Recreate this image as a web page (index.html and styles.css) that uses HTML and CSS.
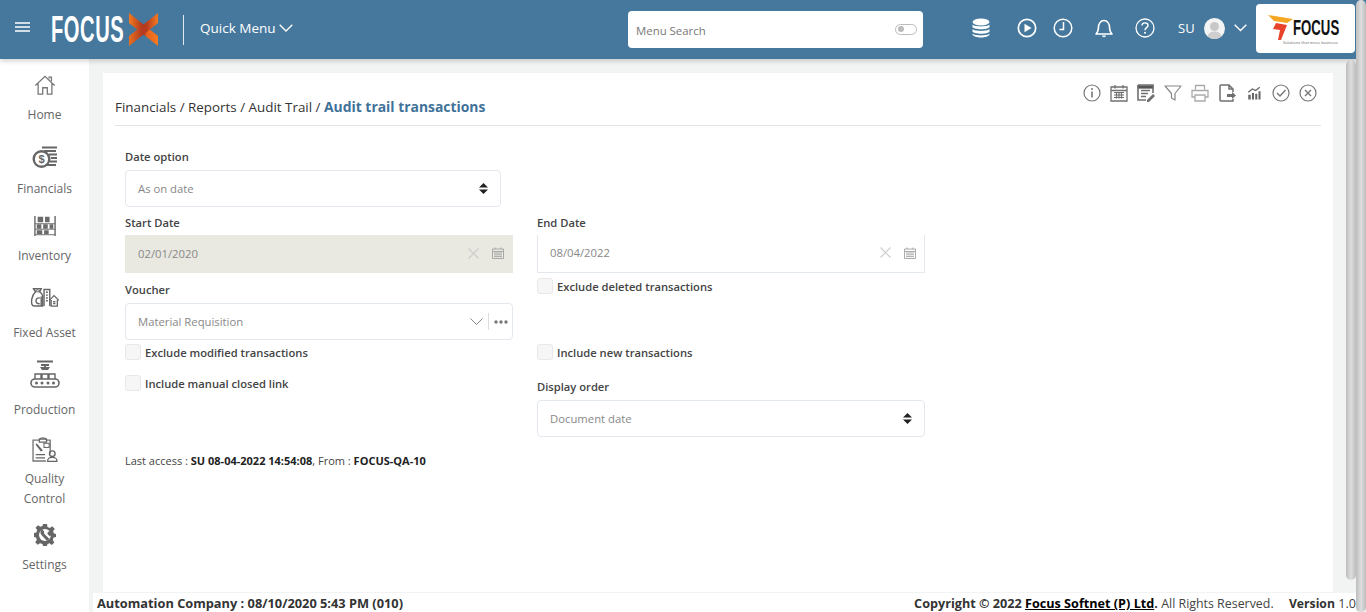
FILE: index.html
```html
<!DOCTYPE html>
<html lang="en">
<head>
  <meta charset="UTF-8" />
  <title>Audit trail transactions - Focus X</title>
  <link rel="stylesheet" href="styles.css">
</head>
<body>

<header class="topbar">
  <svg class="burger" viewBox="0 0 15 10"><path d="M0 1h15M0 5h15M0 9h15" stroke="#fff" stroke-width="1.6"/></svg>
  <span class="brand"><span>FOCUS</span></span>
  <svg class="brand-x" viewBox="0 0 29 33">
    <defs>
      <linearGradient id="xa" x1="0" x2="1" y1="0" y2="0"><stop offset="0" stop-color="#f47a20"/><stop offset=".5" stop-color="#a8321f"/><stop offset=".62" stop-color="#e8621f"/><stop offset="1" stop-color="#f47a20"/></linearGradient>
      <linearGradient id="xb" x1="0" x2="1" y1="0" y2="0"><stop offset="0" stop-color="#e8701f"/><stop offset=".45" stop-color="#b53a1f"/><stop offset=".6" stop-color="#b53a1f"/><stop offset="1" stop-color="#f47a20"/></linearGradient>
    </defs>
    <path d="M0 0 29 23V33L0 10Z" fill="url(#xa)"/>
    <path d="M29 0V10L0 33V23Z" fill="url(#xb)"/>
  </svg>
  <span class="top-divider"></span>
  <span class="quick-menu">Quick Menu</span>
  <svg class="quick-chevron" viewBox="0 0 14 8"><path d="M.7.7 7 7 13.3.7" fill="none" stroke="#fff" stroke-width="1.3"/></svg>

  <div class="menu-search">
    <span>Menu Search</span>
    <span class="toggle"><i></i></span>
  </div>

  <svg class="ti ti-db" viewBox="0 0 18 20"><ellipse cx="9" cy="4" rx="8.5" ry="3.5" fill="#fff"/><path d="M.5 6.5C2 9 16 9 17.5 6.5V9C16 12 2 12 .5 9ZM.5 11C2 13.5 16 13.5 17.5 11V13.5C16 16.5 2 16.5 .5 13.5ZM.5 15.5C2 18 16 18 17.5 15.5V16.5C16 20.5 2 20.5 .5 16.5Z" fill="#fff"/></svg>
  <svg class="ti ti-play" viewBox="0 0 20 20"><circle cx="10" cy="10" r="8.7" fill="none" stroke="#fff" stroke-width="1.7"/><path d="M7.5 5.8 14.5 10 7.5 14.2Z" fill="#fff"/></svg>
  <svg class="ti ti-clock" viewBox="0 0 20 20"><circle cx="10" cy="10" r="8.8" fill="none" stroke="#fff" stroke-width="1.5"/><path d="M10.500 4V11.500H6.500" fill="none" stroke="#fff" stroke-width="1.5"/></svg>
  <svg class="ti ti-bell" viewBox="0 0 18 20"><path d="M1 16c2-2 2.500-4 2.500-7S5.500 2.500 9 2.500 14.500 6 14.500 9s.5 5 2.500 7Z" fill="none" stroke="#fff" stroke-width="1.6" stroke-linejoin="round"/><path d="M6.800 17.500a2.300 2.300 0 0 0 4.400 0Z" fill="#fff"/></svg>
  <svg class="ti ti-help" viewBox="0 0 20 20"><circle cx="10" cy="10" r="9" fill="none" stroke="#fff" stroke-width="1.3"/><path d="M7 7.600C7 5.800 8.300 4.900 10 4.900c1.800 0 3 1 3 2.500 0 2.300-3 2.200-3 4.800" fill="none" stroke="#fff" stroke-width="1.4"/><circle cx="10" cy="14.700" r="1" fill="#fff"/></svg>
  <span class="user-code">SU</span>
  <svg class="avatar" viewBox="0 0 21 21"><circle cx="10.500" cy="10.500" r="10.500" fill="#f4f4f4"/><circle cx="10.500" cy="8.500" r="4.500" fill="#c8c8c8"/><path d="M3.500 18.500c1-4 3.500-5 7-5s6 1 7 5a10.500 10.500 0 0 1-14 0Z" fill="#cfcfcf"/></svg>
  <svg class="user-chevron" viewBox="0 0 13 8"><path d="M.7.7 6.500 6.500 12.300.7" fill="none" stroke="#fff" stroke-width="1.4"/></svg>

  <div class="company-logo">
    <svg class="logo-mark" viewBox="0 0 25 25"><path d="M0 0 25 4 19 8 6 6Z" fill="#f5a623"/><path d="M8 8 19 10 13 25 10 25 12 15 5 14Z" fill="#e8432a"/></svg>
    <div class="logo-words">
      <span class="logo-name"><span>FOCUS</span></span>
      <span class="logo-tag">Solutions that move business</span>
    </div>
  </div>
</header>

<div class="shell">
  <nav class="sidebar">
    <a class="nav-item n-home">
      <svg viewBox="0 0 24 24"><path d="M1.500 12.500 12 2.500 22.500 12.500M4.500 10.500V22H9.500V15H14.500V22H19.500V10.500M16.500 5V3.500H19V8" fill="none" stroke="#777" stroke-width="1.400"/></svg>
      <span>Home</span>
    </a>
    <a class="nav-item n-fin">
      <svg viewBox="0 0 26 22"><circle cx="9.500" cy="13" r="7.800" fill="none" stroke="#666" stroke-width="2.400"/><text x="9.500" y="17" class="dollar">$</text><path d="M10 1.500H25M12 5H24M17 8.500H25M19 12H25M18 15.500H25M13 19H24" stroke="#666" stroke-width="2.200"/></svg>
      <span>Financials</span>
    </a>
    <a class="nav-item n-inv">
      <svg viewBox="0 0 24 24"><path d="M1 1V23M23 1V23" stroke="#666" stroke-width="1.500"/><path d="M1 9.500H23M1 15.500H23M1 21.500H23" stroke="#666" stroke-width="1"/><path d="M4 2H10V8H4ZM12 2H17V8H12ZM3 10H8V15H3ZM10 10H15V15H10ZM17 10H21V15H17ZM3 16.500H9V21H3ZM11 16.500H16V21H11Z" fill="#6b6b6b"/></svg>
      <span>Inventory</span>
    </a>
    <a class="nav-item n-fix">
      <svg viewBox="0 0 30 20"><path d="M3 .8H11L9.500 4C11 5 12 6 12.500 8V19H4C1 19 .5 16 1 12 1.500 9 3 6 5 4Z" fill="none" stroke="#666" stroke-width="1.500"/><path d="M3.500 1.500 5 3.500 7 1.500 8.500 3.500 10.500 1.500M5 4H9.500" fill="none" stroke="#666" stroke-width="1"/><path d="M9.500 10.500C7 10 5.500 11.500 5.500 13.500S7 17 9.500 16.500" fill="none" stroke="#666" stroke-width="1.500"/><path d="M14 19V1.500H20V19M16 4.500H18M16 7.500H18M16 10.500H18M16 13.500H18M11 9V19" fill="none" stroke="#666" stroke-width="1.500"/><path d="M19.500 13 24.500 8 29.500 13M21.500 12.500V19H28V12.500M23.500 14.500H26M23.500 16.500H26" fill="none" stroke="#666" stroke-width="1.400"/></svg>
      <span>Fixed Asset</span>
    </a>
    <a class="nav-item n-pro">
      <svg viewBox="0 0 30 28"><path d="M7 1.500H23M11 5H19M15 5V10" stroke="#666" stroke-width="1.800"/><path d="M10 7H20L18 10H12Z" fill="#666"/><path d="M5 19V14H11V19M12 19V14H18V19M19 19V14H25V19" fill="none" stroke="#666" stroke-width="1.400"/><rect x="1" y="19" width="28" height="8" rx="4" fill="none" stroke="#666" stroke-width="1.600"/><circle cx="6.500" cy="23" r="1.500" fill="#666"/><circle cx="12" cy="23" r="1.500" fill="#666"/><circle cx="18" cy="23" r="1.500" fill="#666"/><circle cx="23.500" cy="23" r="1.500" fill="#666"/></svg>
      <span>Production</span>
    </a>
    <a class="nav-item n-qua">
      <svg viewBox="0 0 26 25"><path d="M18 17V4H14.500C14 1 8 1 7.500 4H1.500V24H14" fill="none" stroke="#777" stroke-width="1.300"/><path d="M7.500 3H14.500V6H7.500ZM4 18H13M4 21H13" fill="none" stroke="#666" stroke-width="1.200"/><path d="M5 7 11 14 9 15 4 8.500Z" fill="#666"/><rect x="12" y="7" width="5" height="4" fill="none" stroke="#666"/><circle cx="20" cy="17" r="2.700" fill="none" stroke="#666" stroke-width="1.300"/><path d="M15.500 24.500C15.500 21 17 20.500 20 20.500S24.500 21 24.500 24.500Z" fill="none" stroke="#666" stroke-width="1.300"/></svg>
      <span>Quality<br>Control</span>
    </a>
    <a class="nav-item n-set">
      <svg viewBox="0 0 22 22"><path d="M9 0H13L13.500 3 15.800 4 18.300 2.200 20.800 5 19 7.300 20 9.500 22 10V13L19.600 13.500 18.800 16 20.300 18.500 17.800 21 15.500 19.300 13.500 20 13 22H9L8.500 20 6 19.200 3.700 20.800 1.200 18.300 2.800 16 2 13.500 0 13V9L2.300 8.500 3.200 6 1.500 3.700 4 1.200 6.300 2.800 8.500 2Z" fill="#666"/><circle cx="11" cy="11" r="6" fill="#fff"/><path d="M8 5.500C6 7 6 9.500 7.500 11L13 17 15.500 15 10 9.500C10.500 8 10 6 8 5.500ZM17 7C15 6.500 13 8 13.500 10L16 12.500C17.500 11.500 18 9 17 7Z" fill="#666"/></svg>
      <span>Settings</span>
    </a>
  </nav>

  <main class="content">
    <section class="card">
      <div class="title-row">
        <div class="crumbs">Financials / Reports / Audit Trail / <b>Audit trail transactions</b></div>
        <div class="tools">
          <svg viewBox="0 0 18 18"><circle cx="9" cy="9" r="8" fill="none" stroke="#777" stroke-width="1.200"/><path d="M9 7.500V13.500" stroke="#777" stroke-width="1.600"/><circle cx="9" cy="5" r="1" fill="#777"/></svg>
          <svg viewBox="0 0 18 18"><path d="M1 3H17V17H1ZM1 6.500H17M5 1V4.500M13 1V4.500" fill="none" stroke="#707070" stroke-width="1.300"/><path d="M4 8.500H14M4 11H14M4 13.500H14M6.500 8V14.500M9 8V14.500M11.500 8V14.500" stroke="#707070" stroke-width="1.200"/></svg>
          <svg viewBox="0 0 18 18"><path d="M1 1H16V9M9 16H1V1" fill="none" stroke="#707070" stroke-width="1.600"/><path d="M1 2H16V4H1ZM4 6.500H13M4 9.500H11M4 12.500H9" stroke="#707070" stroke-width="1.300"/><path d="M10 16 16 10 18 12 12 18H10Z" fill="#707070"/></svg>
          <svg viewBox="0 0 18 18"><path d="M1 2H17L11 9.500V16L7.500 14V9.500Z" fill="none" stroke="#888" stroke-width="1.200" stroke-linejoin="round"/></svg>
          <svg viewBox="0 0 18 18"><path d="M4.500 5.500V1.500H13.500V5.500M4 13H1V6.500H17V13H14" fill="none" stroke="#aaa" stroke-width="1.300"/><path d="M4 11H14V17H4Z" fill="none" stroke="#aaa" stroke-width="1.300"/></svg>
          <svg viewBox="0 0 18 18"><path d="M15 8V5L11 1H3Q2 1 2 2V16Q2 17 3 17H15V15M11 1V5H15" fill="none" stroke="#707070" stroke-width="1.500"/><path d="M9 10H14V8L18 11.500 14 15V13H9Z" fill="#707070"/></svg>
          <svg viewBox="-2 -2 22 22"><path d="M2 11H5V17H2ZM6.500 9H9V17H6.500ZM10.500 10H13V17H10.500ZM14.500 7H17V17H14.500Z" fill="#666"/><path d="M2 8 7 4 11 6 16 2" fill="none" stroke="#666" stroke-width="1.500"/></svg>
          <svg viewBox="0 0 18 18"><circle cx="9" cy="9" r="8" fill="none" stroke="#777" stroke-width="1.200"/><path d="M5 9 8 12 13.500 6" fill="none" stroke="#777" stroke-width="1.400"/></svg>
          <svg viewBox="0 0 18 18"><circle cx="9" cy="9" r="8" fill="none" stroke="#777" stroke-width="1.200"/><path d="M6 6 12 12M12 6 6 12" stroke="#777" stroke-width="1.400"/></svg>
        </div>
      </div>

      <form class="report-form">
        <label class="field-label">Date option</label>
        <div class="control control-short">
          <span>As on date</span>
          <svg class="updown" viewBox="0 0 9 11"><path d="M4.500 0 9 4.500H0ZM4.500 11 0 6.500H9Z" fill="#222"/></svg>
        </div>

        <div class="form-cols">
          <div class="col">
            <label class="field-label">Start Date</label>
            <div class="control control-date disabled">
              <span>02/01/2020</span>
              <svg class="clear" viewBox="0 0 11 11"><path d="M.5.500 10.500 10.500M10.500.500 .5 10.500" stroke="#ccc" stroke-width="1.100"/></svg>
              <svg class="cal" viewBox="0 0 12 12"><path d="M.5 2H11.500V11.500H.5ZM.5 4.500H11.500M3 .5V2.500M9 .5V2.500M2 6H10M2 7.800H10M2 9.600H10" fill="none" stroke="#aaa" stroke-width="1"/></svg>
            </div>
            <label class="field-label voucher-label">Voucher</label>
            <div class="control control-voucher">
              <span>Material Requisition</span>
              <svg class="vchev" viewBox="0 0 13 7"><path d="M.5.500 6.500 6.500 12.500.5" fill="none" stroke="#888" stroke-width="1"/></svg>
              <i class="vsep"></i>
              <svg class="dots" viewBox="0 0 14 4"><circle cx="2" cy="2" r="1.700" fill="#777"/><circle cx="7" cy="2" r="1.700" fill="#777"/><circle cx="12" cy="2" r="1.700" fill="#777"/></svg>
            </div>
            <label class="check check-mod"><i></i>Exclude modified transactions</label>
            <label class="check check-man"><i></i>Include manual closed link</label>
          </div>

          <div class="col">
            <label class="field-label">End Date</label>
            <div class="control control-date open-top">
              <span>08/04/2022</span>
              <svg class="clear" viewBox="0 0 11 11"><path d="M.5.500 10.500 10.500M10.500.500 .5 10.500" stroke="#ccc" stroke-width="1.100"/></svg>
              <svg class="cal" viewBox="0 0 12 12"><path d="M.5 2H11.500V11.500H.5ZM.5 4.500H11.500M3 .5V2.500M9 .5V2.500M2 6H10M2 7.800H10M2 9.600H10" fill="none" stroke="#aaa" stroke-width="1"/></svg>
            </div>
            <label class="check check-del"><i></i>Exclude deleted transactions</label>
            <label class="check check-new"><i></i>Include new transactions</label>
            <label class="field-label order-label">Display order</label>
            <div class="control">
              <span>Document date</span>
              <svg class="updown" viewBox="0 0 9 11"><path d="M4.500 0 9 4.500H0ZM4.500 11 0 6.500H9Z" fill="#222"/></svg>
            </div>
          </div>
        </div>

        <p class="last-access">Last access : <b>SU 08-04-2022 14:54:08</b>, From : <b>FOCUS-QA-10</b></p>
      </form>
    </section>

    <footer class="statusbar">
      <b>Automation Company : 08/10/2020 5:43 PM (010)</b>
      <span class="status-right"><b>Copyright © 2022 <u>Focus Softnet (P) Ltd</u>.</b> <span class="rights">All Rights Reserved.</span> <b class="version">Version</b> 1.0</span>
    </footer>
  </main>
</div>

<div class="scroll scroll-inner"></div>
<div class="scroll scroll-outer"></div>

</body>
</html>
```

FILE: styles.css
```css
* {
  box-sizing: border-box;
}
html, body {
  margin: 0;
  height: 612px;
  overflow: hidden;
}
body {
  font-family: "Open Sans", "Noto Sans", sans-serif;
  font-size: 12px;
  color: #333;
  background: #f2f4f4;
}

/* top bar */
.topbar {
  display: flex;
  align-items: center;
  height: 59px;
  background: #46789d;
  box-shadow: 0 2px 5px rgba(0,0,0,.18);
  position: relative;
  z-index: 2;
}
.burger {
  width: 15px;
  height: 10px;
  margin: 0 0 5px 15px;
  flex: none;
}
.brand {
  font-family: "Liberation Sans", sans-serif;
  font-weight: 700;
  font-size: 37px;
  line-height: 36px;
  color: #fff;
  margin-left: 21px;
  width: 78px;
  flex: none;
}
.brand span {
  display: inline-block;
  transform: scaleX(.545);
  transform-origin: left center;
  letter-spacing: 1px;
}
.brand-x {
  width: 29px;
  height: 33px;
  flex: none;
}
.top-divider {
  width: 1px;
  height: 30px;
  background: #dfe8ef;
  margin-left: 25px;
}
.quick-menu {
  color: #fff;
  font-size: 13.5px;
  margin: 0 0 3px 16px;
  width: 79px;
}
.quick-chevron {
  width: 14px;
  height: 8px;
  flex: none;
  margin-bottom: 3px;
}
.menu-search {
  display: flex;
  align-items: center;
  justify-content: space-between;
  width: 295px;
  height: 37px;
  margin-left: 335px;
  padding: 2px 6px 0 8px;
  background: #fff;
  border-radius: 4px;
  font-size: 11.4px;
  color: #777;
}
.toggle {
  width: 22px;
  height: 11px;
  border: 1px solid #bbb;
  border-radius: 6px;
  padding: 1.5px;
  margin-bottom: 3px;
}
.toggle i {
  display: block;
  width: 6px;
  height: 6px;
  border-radius: 50%;
  background: #bbb;
}
.ti {
  flex: none;
  height: 20px;
  margin-bottom: 3px;
}
.ti-db { width: 18px; margin-left: 49px; }
.ti-play { width: 20px; margin-left: 27px; }
.ti-clock { width: 20px; margin-left: 16px; }
.ti-bell { width: 18px; margin-left: 22px; }
.ti-help { width: 20px; margin-left: 22px; }
.user-code {
  color: #fff;
  font-size: 13px;
  margin: 0 0 3px 23px;
  width: 26px;
}
.avatar {
  width: 21px;
  height: 21px;
  flex: none;
  margin-bottom: 3px;
}
.user-chevron {
  width: 13px;
  height: 8px;
  margin: 0 0 3px 9px;
  flex: none;
}
.company-logo {
  display: flex;
  align-items: center;
  width: 99px;
  height: 49px;
  margin: 0 0 2px 9px;
  padding-left: 12px;
  background: #fff;
  border-radius: 4px;
  flex: none;
}
.logo-mark {
  width: 25px;
  height: 25px;
  margin-top: -2px;
  flex: none;
}
.logo-words {
  display: flex;
  flex-direction: column;
  width: 46px;
  margin-top: 4px;
}
.logo-name {
  font-family: "Liberation Sans", sans-serif;
  font-weight: 700;
  font-size: 22px;
  line-height: 24px;
  height: 24px;
  white-space: nowrap;
  color: #111;
}
.logo-name span {
  display: inline-block;
  transform: scaleX(.6);
  transform-origin: left center;
}
.logo-tag {
  font-size: 4px;
  line-height: 5px;
  margin-left: -10px;
  color: #666;
  white-space: nowrap;
}

/* layout */
.shell {
  display: flex;
  height: 553px;
}
.sidebar {
  width: 89px;
  flex: none;
  background: #fff;
  padding-top: 12px;
}
.nav-item {
  display: flex;
  flex-direction: column;
  align-items: center;
  font-size: 12px;
  line-height: 20px;
  color: #666;
  text-align: center;
}
.nav-item svg {
  display: block;
  height: 28px;
  width: 30px;
}
.n-home svg { height: 22px; margin-top: 3px; margin-bottom: 9px; }
.n-fin { margin-top: 21px; }
.n-fin svg { height: 22px; margin-bottom: 11px; }
.n-inv { margin-top: 16px; }
.n-inv svg { height: 22px; margin-bottom: 9px; }
.n-fix { margin-top: 19px; }
.n-fix svg { margin-bottom: 16px; height: 19px; margin-top: 3px; }
.n-pro { margin-top: 17px; }
.n-pro svg { margin-bottom: 12px; }
.n-qua { margin-top: 16px; }
.n-qua svg { margin-bottom: 7px; height: 26px; }
.n-set { margin-top: 15px; }
.n-set svg { margin-bottom: 9px; height: 22px; }
.dollar {
  font-family: "Liberation Sans", sans-serif;
  font-size: 11px;
  font-weight: 700;
  fill: #666;
  text-anchor: middle;
}

/* main card */
.content {
  flex: 1;
  min-width: 0;
  padding: 14px 0 0 14px;
  position: relative;
}
.card {
  width: 1230px;
  height: 519px;
  background: #fff;
  padding: 0 12px;
}
.title-row {
  display: flex;
  justify-content: space-between;
  height: 53px;
  border-bottom: 1px solid #e4e4e4;
}
.crumbs {
  font-size: 13.4px;
  color: #333;
  padding-top: 24px;
}
.crumbs b {
  color: #3f7299;
  font-weight: 700;
  font-size: 13.9px;
}
.tools {
  display: flex;
  gap: 9px;
  padding: 11px 4px 0 0;
}
.tools svg {
  width: 18px;
  height: 18px;
}

/* form */
.report-form {
  padding: 22px 0 0 10px;
}
.field-label {
  display: block;
  font-size: 11.2px;
  font-weight: 600;
  line-height: 17px;
  color: #444;
}
.control {
  display: flex;
  align-items: center;
  height: 37px;
  margin-top: 5px;
  padding: 0 12px;
  border: 1px solid #e3e8ee;
  border-radius: 4px;
  font-size: 11.3px;
  color: #888;
  background: #fff;
}
.control > span:first-child {
  flex: 1;
}
.control-short {
  width: 376px;
}
.control-date {
  height: 38px;
  margin-top: 4px;
  padding-bottom: 2px;
}
.control-voucher {
  padding-right: 4px;
}
.disabled {
  background: #e9e8e1;
  border-color: #e9e8e1;
  border-radius: 0;
}
.open-top {
  border-top: 0;
  border-radius: 0;
}
.updown {
  width: 9px;
  height: 11px;
}
.clear {
  width: 11px;
  height: 11px;
  margin-right: 13px;
}
.cal {
  width: 12px;
  height: 12px;
  margin-right: -4px;
}
.vchev {
  width: 13px;
  height: 7px;
}
.vsep {
  width: 1px;
  height: 17px;
  margin: 0 5px 0 5px;
  background: #ddd;
}
.dots {
  width: 14px;
  height: 4px;
}
.form-cols {
  display: flex;
  gap: 24px;
  margin-top: 7px;
}
.col {
  width: 388px;
}
.voucher-label {
  margin-top: 8px;
}
.check {
  display: flex;
  align-items: center;
  gap: 4px;
  height: 16px;
  font-size: 11.2px;
  font-weight: 600;
  color: #444;
}
.check i {
  width: 16px;
  height: 16px;
  border: 1px solid #e8e8e8;
  border-radius: 3px;
  background: #f6f6f6;
}
.check-mod { margin-top: 4px; }
.check-man { margin-top: 15px; }
.check-del { margin-top: 5px; }
.check-new { margin-top: 50px; }
.order-label { margin-top: 18px; }
.last-access {
  margin: 16px 0 0;
  font-size: 11px;
  color: #444;
}
.last-access b {
  color: #222;
}

/* footer */
.statusbar {
  display: flex;
  justify-content: space-between;
  width: 1263px;
  height: 19px;
  margin: 1px 0 0 -10px;
  padding-left: 4px;
  background: #fff;
  font-size: 12.8px;
  line-height: 21px;
  color: #444;
  white-space: nowrap;
}
.statusbar b {
  color: #333;
}
.statusbar u {
  color: #000;
}
.status-right {
  font-size: 12.65px;
}
.rights {
  font-size: 12.4px;
}
.version {
  margin-left: 12px;
  font-size: 12.2px;
}

/* fake scrollbars */
.scroll {
  position: absolute;
  background: linear-gradient(90deg, #bdbdbd, #dedede 50%, #bdbdbd);
  z-index: 3;
}
.scroll-inner {
  left: 1346px;
  top: 60px;
  width: 10px;
  height: 520px;
  border-radius: 5px;
}
.scroll-outer {
  left: 1356px;
  top: 0;
  width: 10px;
  height: 612px;
  border-radius: 5px;
}
```
